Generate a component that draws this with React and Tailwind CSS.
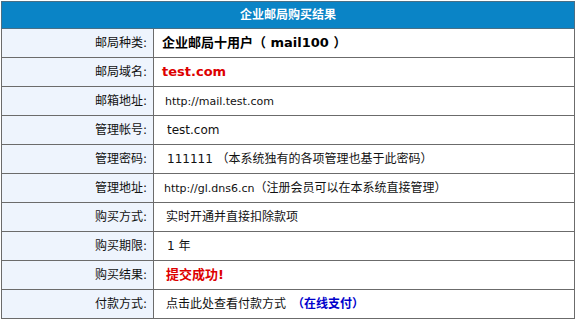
const ROWS = [
  { label: '邮局种类:', value: '企业邮局十用户（ mail100 ）', kind: 'bold' },
  { label: '邮局域名:', value: 'test.com', kind: 'red' },
  { label: '邮箱地址:', value: 'http://mail.test.com', kind: 'small', pad: 'pl-[11px]' },
  { label: '管理帐号:', value: 'test.com', pad: 'pl-[13px]' },
  { label: '管理密码:', value: '111111 （本系统独有的各项管理也基于此密码）', pad: 'pl-[13px]' },
  { label: '管理地址:', value: 'http://gl.dns6.cn（注册会员可以在本系统直接管理）', kind: 'small', pad: 'pl-[10px]' },
  { label: '购买方式:', value: '实时开通并直接扣除款项', pad: 'pl-[12px]' },
  { label: '购买期限:', value: '1 年', pad: 'pl-[13px]' },
  { label: '购买结果:', value: '提交成功!', kind: 'red', pad: 'pl-[12px]' },
  { label: '付款方式:', value: 'pay', pad: 'pl-[12px]' },
]

const FONT = { fontFamily: 'Tahoma, "DejaVu Sans", "Noto Sans CJK SC", sans-serif' }

function Value({ row }) {
  if (row.value === 'pay') {
    return (
      <span>
        点击此处查看付款方式
        <span className="ml-[6px] font-bold text-[#0000cc]">（在线支付）</span>
      </span>
    )
  }
  if (row.kind === 'bold') return <span className="font-bold text-[13px] text-black">{row.value}</span>
  if (row.kind === 'red') return <span className="font-bold text-[13px] text-[#dd0000]">{row.value}</span>
  if (row.kind === 'small') {
    const [url, rest] = row.value.split('（')
    return (
      <span>
        <span className="text-[11px]">{url}</span>
        {rest && <span>（{rest}</span>}
      </span>
    )
  }
  return <span>{row.value}</span>
}

export default function App() {
  return (
    <div className="w-[577px] h-[321px] bg-white pl-px pt-px" style={FONT}>
      <table className="w-[574px] border-collapse text-[12px] text-[#111]">
        <thead>
          <tr>
            <th colSpan={2} className="h-[27px] bg-[#0a84c6] border border-[#4a6f85] text-white font-bold text-[12px] text-center">
              企业邮局购买结果
            </th>
          </tr>
        </thead>
        <tbody>
          {ROWS.map((row) => (
            <tr key={row.label} className="h-[29px]">
              <td className="w-[152px] bg-[#eef4fd] border border-[#6b6b6b] text-right pr-[6px] whitespace-nowrap">
                {row.label}
              </td>
              <td className={`border border-[#6b6b6b] whitespace-nowrap ${row.pad || 'pl-[8px]'}`}>
                <Value row={row} />
              </td>
            </tr>
          ))}
        </tbody>
      </table>
    </div>
  )
}
